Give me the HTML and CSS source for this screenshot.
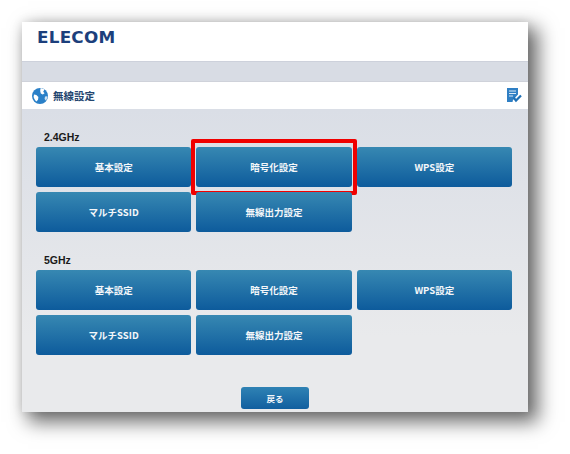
FILE: index.html
```html
<!DOCTYPE html>
<html lang="ja">

<head>
	<meta charset="UTF-8">
	<title>無線設定</title>
	<link rel="stylesheet" href="styles.css">
</head>

<body>
	<div class="window">
		<!-- ロゴ -->
		<div class="header"><span class="logo">ELECOM</span></div>
		<div class="band"></div>
		<!-- タイトル -->
		<div class="title">
			<svg class="globe" width="16" height="16" viewBox="0 0 16 16">
				<circle cx="8" cy="8" r="8" fill="#2a80c8"/>
				<path d="M8.5 0.2C10 0.2 11.4 0.8 12.4 1.6L11.2 3.8L12.6 5.2L10.8 6.6L8.8 5.4L8.2 3Z" fill="#fff"/>
				<path d="M2 6.6L4.4 7L6.4 9L6 11.8L4.4 13.4C3 12.4 1.8 10.6 1.6 8.8Z" fill="#fff"/>
				<path d="M13 8.6L15.4 8.2C15.4 9.8 14.8 11.4 13.8 12.6L12.6 11Z" fill="#cfe4f5"/>
			</svg>
			<span class="title-text">無線設定</span>
			<svg class="doc" width="16" height="15" viewBox="0 0 16 15">
				<path d="M1 0H12V6.5L7 12L6.5 14H1Z" fill="#2f7fc4"/>
				<path d="M3 3H10M3 5.5H10M3 8H7" stroke="#d8e8f5" stroke-width="1"/>
				<path d="M7.5 9.5L10 12.5L15 7.5" fill="none" stroke="#1d6fb5" stroke-width="2.2"/>
			</svg>
		</div>
		<div class="content">
			<div class="section">
				<div class="label">2.4GHz</div>
				<ul class="btns">
					<li><a class="btn" href="">基本設定</a></li>
					<li class="marked"><a class="btn" href="">暗号化設定</a></li>
					<li><a class="btn" href="">WPS設定</a></li>
					<li><a class="btn" href="">マルチSSID</a></li>
					<li><a class="btn" href="">無線出力設定</a></li>
				</ul>
			</div>
			<div class="section">
				<div class="label">5GHz</div>
				<ul class="btns">
					<li><a class="btn" href="">基本設定</a></li>
					<li><a class="btn" href="">暗号化設定</a></li>
					<li><a class="btn" href="">WPS設定</a></li>
					<li><a class="btn" href="">マルチSSID</a></li>
					<li><a class="btn" href="">無線出力設定</a></li>
				</ul>
			</div>
			<div class="foot"><a class="back" href="">戻る</a></div>
		</div>
	</div>
</body>

</html>
```

FILE: styles.css
```css
* {
	margin: 0;
	padding: 0;
	box-sizing: border-box;
}
html,body{
	height: 100%;
	background-color: #fff;
	overflow: hidden;
}
body{
	padding: 22px 0 0 22px;
	font-family: "Liberation Sans", "Noto Sans CJK JP", sans-serif;
}
a{
	text-decoration: none;
}
li {
	list-style: none;
}
.window{
	display: flex;
	flex-direction: column;
	width: 506px;
	height: 390px;
	background-color: #fff;
	box-shadow: 8px 8px 18px 2px rgba(0, 0, 0, 0.58), 0 0 10px rgba(0, 0, 0, 0.1);
}
.header{
	display: flex;
	align-items: center;
	height: 39px;
	padding: 0 0 7px 15px;
}
.logo{
	font-family: "DejaVu Sans", sans-serif;
	font-size: 15px;
	font-weight: bold;
	letter-spacing: 0.2px;
	color: #1c3f7c;
	transform: scaleX(1.12);
	transform-origin: left;
}
.band{
	height: 21px;
	background-color: #d8dce4;
	border-top: 1px solid #cdd1db;
	border-bottom: 1px solid #cfd2da;
}
.title{
	display: flex;
	align-items: center;
	height: 27px;
	padding: 0 6px 0 10px;
}
.title-text{
	margin-left: 5px;
	flex: 1;
	font-size: 10.5px;
	font-weight: bold;
	color: #24466f;
}
.content{
	flex: 1;
	padding: 21px 16px 0 14px;
	background: linear-gradient(#dadee6, #e9eaec 75%);
}
.section + .section{
	margin-top: 21px;
}
.label{
	height: 17px;
	padding-left: 8px;
	font-size: 10.5px;
	line-height: 15px;
	font-weight: bold;
	color: #1a1a1a;
}
.btns{
	display: grid;
	grid-template-columns: repeat(3, 1fr);
	gap: 5px;
}
.btns li{
	position: relative;
}
.btn{
	display: flex;
	align-items: center;
	justify-content: center;
	height: 40px;
	border-radius: 3px;
	font-family: "Noto Sans CJK JP", sans-serif;
	font-size: 9.5px;
	font-weight: bold;
	color: #f4f7fa;
	background: linear-gradient(#3788b2, #0d5b9c);
}
/* 赤枠 */
.marked::after{
	content: "";
	position: absolute;
	left: -5px;
	top: -8px;
	right: -5px;
	bottom: -8px;
	border: 4px solid #f00000;
	border-radius: 2px;
}
.foot{
	display: flex;
	justify-content: center;
	margin-top: 32px;
	padding-left: 2px;
}
.back{
	display: flex;
	align-items: center;
	justify-content: center;
	width: 68px;
	height: 22px;
	border-radius: 3px;
	font-family: "Noto Sans CJK JP", sans-serif;
	font-size: 8.5px;
	font-weight: bold;
	color: #f4f7fa;
	background: linear-gradient(#2f82b4, #115f9f);
}
```
